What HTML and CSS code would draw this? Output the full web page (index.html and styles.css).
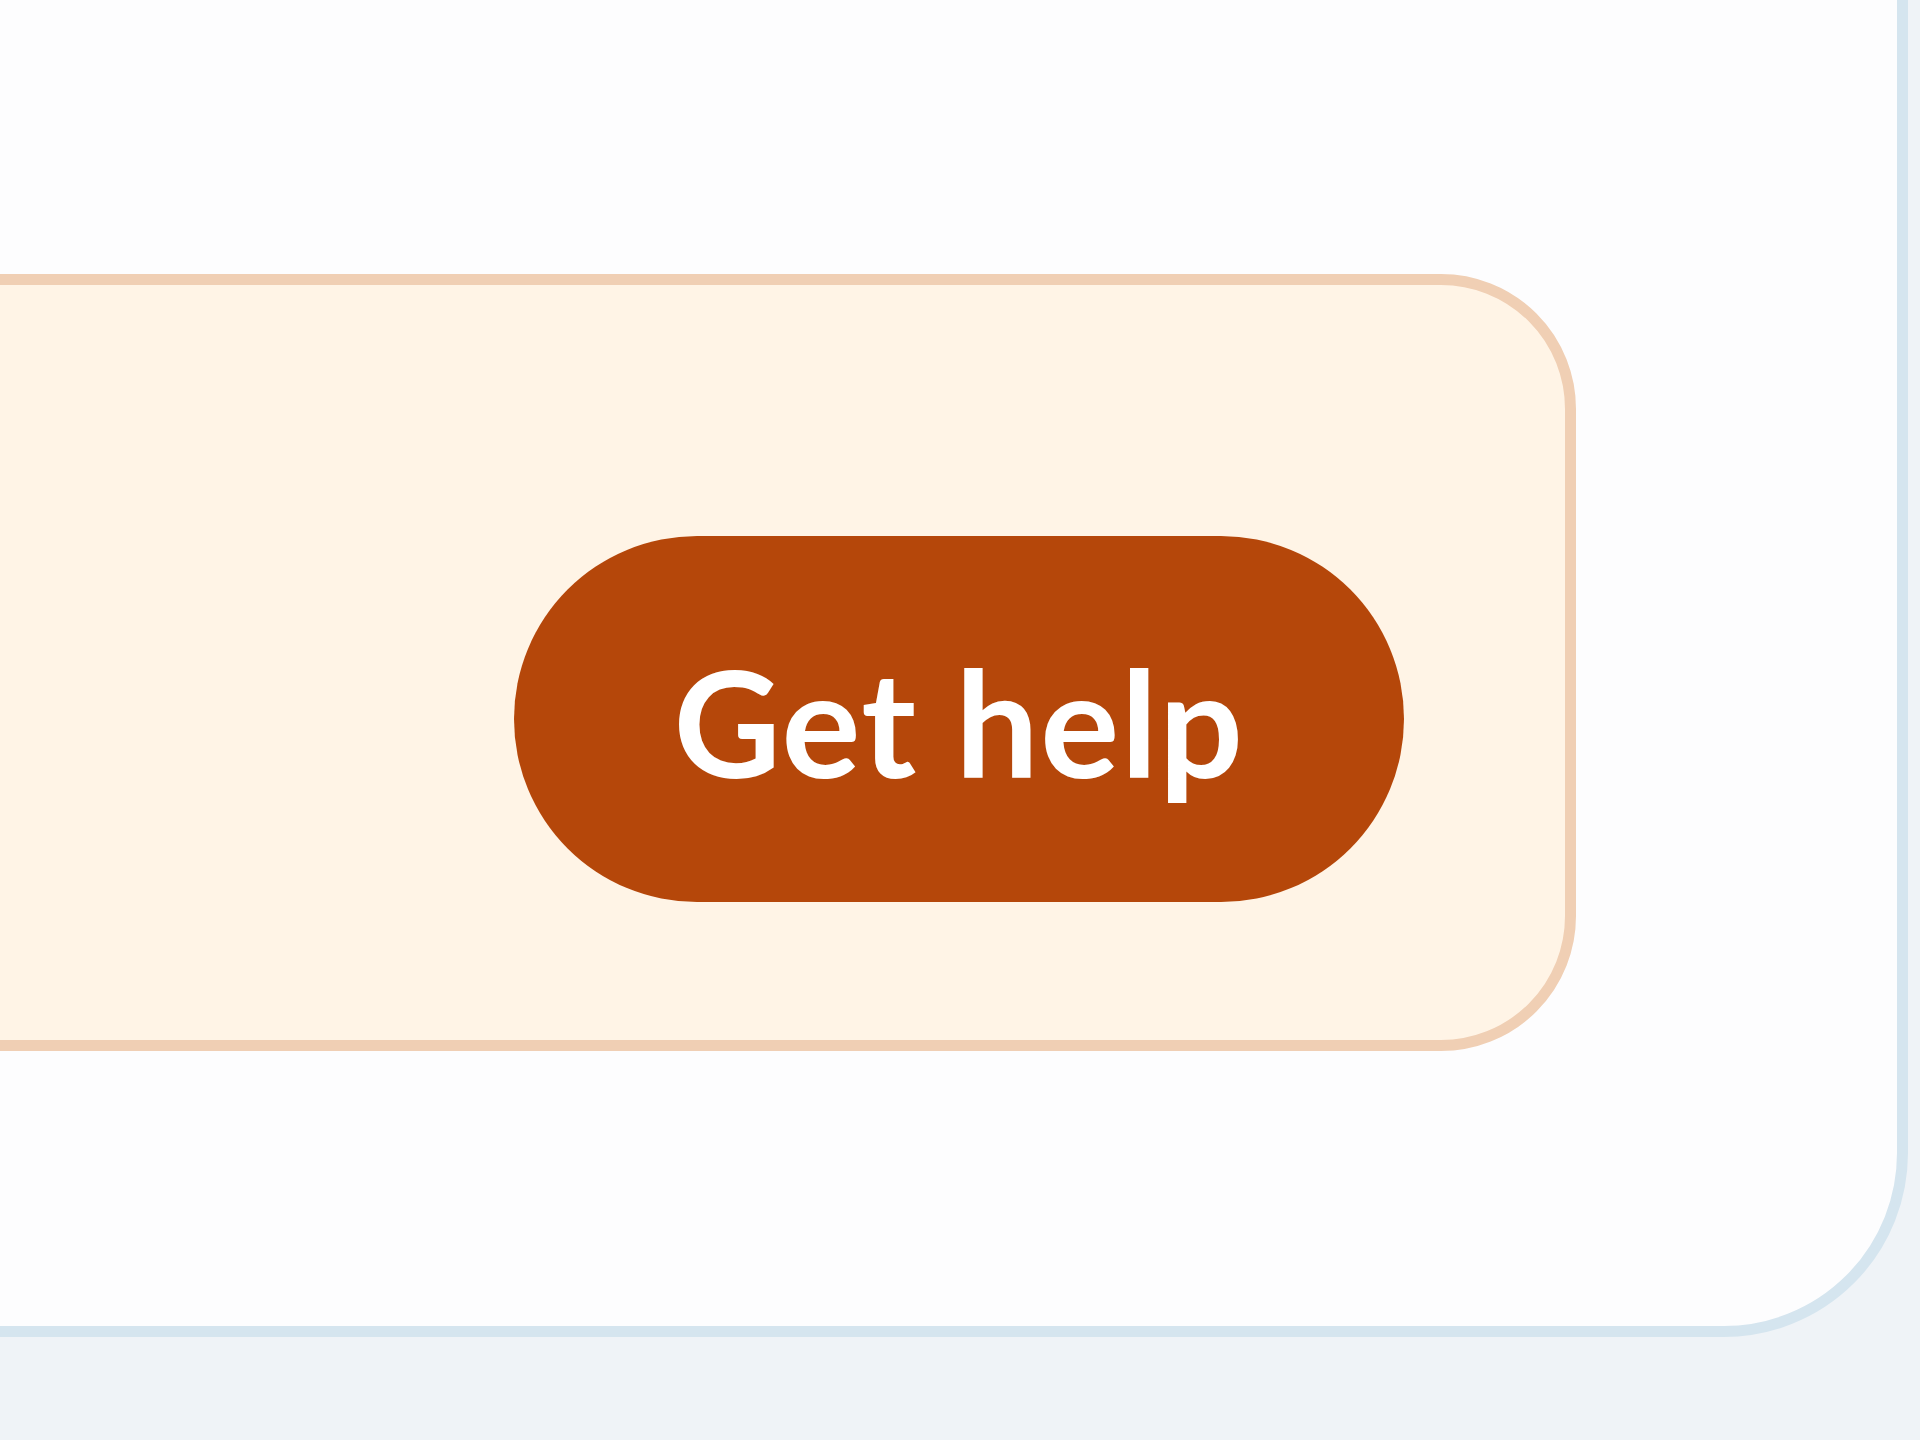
FILE: index.html
```html
<!DOCTYPE html>
<html lang="en">
<head>
<meta charset="utf-8">
<title>Get help</title>
<link rel="stylesheet" href="styles.css">
</head>
<body>
<div class="card">
  <div class="banner">
    <button class="help-btn" type="button">Get help</button>
  </div>
</div>
</body>
</html>
```
FILE: styles.css
```css
html, body {
  margin: 0;
  padding: 0;
}
body {
  background: #eff3f7;
  width: 1920px;
  height: 1440px;
  overflow: hidden;
  font-family: Lato, "Noto Sans", sans-serif;
}
.card {
  box-sizing: border-box;
  margin: -200px 12px 0 -300px;
  height: 1537px;
  background: #fdfdfe;
  border: 11px solid #d5e5ef;
  border-radius: 184px;
  padding: 463px 321px 0 139px;
}
.banner {
  box-sizing: border-box;
  height: 777px;
  background: #fff4e6;
  border: 11px solid #f0cfb4;
  border-radius: 135px;
  display: flex;
  justify-content: flex-end;
  align-items: flex-end;
  padding: 0 161px 138px 0;
}
.help-btn {
  width: 890px;
  height: 366px;
  border: none;
  border-radius: 183px;
  background: #b5470a;
  color: #ffffff;
  font-family: Lato, "Noto Sans", sans-serif;
  font-weight: 700;
  font-size: 148px;
  letter-spacing: 1.5px;
  line-height: 1;
  display: flex;
  align-items: center;
  justify-content: center;
  padding: 4px 0 0 0;
}
```
